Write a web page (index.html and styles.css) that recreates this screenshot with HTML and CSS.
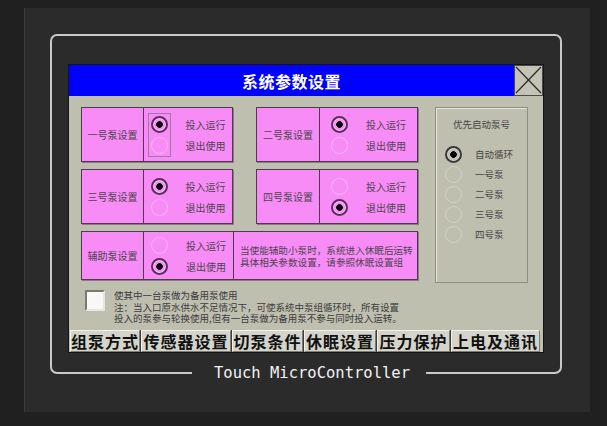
FILE: index.html
```html
<!DOCTYPE html>
<html lang="zh-CN">
<head>
    <meta charset="UTF-8">
    <meta name="viewport" content="width=device-width, initial-scale=1.0">
    <title>系统参数设置</title>
    <link rel="stylesheet" href="styles.css">
</head>
<body>
    <div class="device">
        <div class="bezel">
            <div class="window">
                <div class="titlebar">
                    <div class="title">系统参数设置</div>
                    <div class="close">
                        <svg width="27" height="28" viewBox="0 0 27 28">
                            <line x1="1" y1="1" x2="26" y2="27" stroke="#2a2a2a" stroke-width="1.2"/>
                            <line x1="26" y1="1" x2="1" y2="27" stroke="#2a2a2a" stroke-width="1.2"/>
                        </svg>
                    </div>
                </div>

                <div class="panel">
                    <div class="main">
                        <div class="pumps">
                            <div class="pump">
                                <div class="pump-name">一号泵设置</div>
                                <div class="pump-mode">
                                    <div class="radios focus">
                                        <span class="radio on"></span>
                                        <span class="radio"></span>
                                    </div>
                                    <div class="mode-labels"><span>投入运行</span><span>退出使用</span></div>
                                </div>
                            </div>
                            <div class="pump wide">
                                <div class="pump-name">二号泵设置</div>
                                <div class="pump-mode">
                                    <div class="radios">
                                        <span class="radio on"></span>
                                        <span class="radio"></span>
                                    </div>
                                    <div class="mode-labels"><span>投入运行</span><span>退出使用</span></div>
                                </div>
                            </div>
                            <div class="pump">
                                <div class="pump-name">三号泵设置</div>
                                <div class="pump-mode">
                                    <div class="radios">
                                        <span class="radio on"></span>
                                        <span class="radio"></span>
                                    </div>
                                    <div class="mode-labels"><span>投入运行</span><span>退出使用</span></div>
                                </div>
                            </div>
                            <div class="pump wide">
                                <div class="pump-name">四号泵设置</div>
                                <div class="pump-mode">
                                    <div class="radios">
                                        <span class="radio"></span>
                                        <span class="radio on"></span>
                                    </div>
                                    <div class="mode-labels"><span>投入运行</span><span>退出使用</span></div>
                                </div>
                            </div>
                            <div class="pump pump-aux">
                                <div class="pump-name">辅助泵设置</div>
                                <div class="pump-mode">
                                    <div class="radios">
                                        <span class="radio"></span>
                                        <span class="radio on"></span>
                                    </div>
                                    <div class="mode-labels"><span>投入运行</span><span>退出使用</span></div>
                                </div>
                                <div class="pump-hint">
                                    <p>当使能辅助小泵时，系统进入休眠后运转<br>具体相关参数设置，请参照休眠设置组</p>
                                </div>
                            </div>
                        </div>

                        <div class="priority">
                            <div class="priority-title">优先启动泵号</div>
                            <ul class="priority-list">
                                <li><span class="radio on"></span>自动循环</li>
                                <li><span class="radio"></span>一号泵</li>
                                <li><span class="radio"></span>二号泵</li>
                                <li><span class="radio"></span>三号泵</li>
                                <li><span class="radio"></span>四号泵</li>
                            </ul>
                        </div>
                    </div>

                    <div class="standby">
                        <span class="checkbox"></span>
                        <p>使其中一台泵做为备用泵使用<br>注：当入口原水供水不足情况下，可使系统中泵组循环时，所有设置<br>投入的泵参与轮换使用,但有一台泵做为备用泵不参与同时投入运转。</p>
                    </div>

                    <div class="tabs">
                        <div class="tab t1">组泵方式</div>
                        <div class="tab t2">传感器设置</div>
                        <div class="tab t3">切泵条件</div>
                        <div class="tab t4">休眠设置</div>
                        <div class="tab t5">压力保护</div>
                        <div class="tab t6">上电及通讯</div>
                    </div>
                </div>
            </div>
            <div class="brand">Touch MicroController</div>
        </div>
    </div>
</body>
</html>
```

FILE: styles.css
```css
body {
    margin: 0;
    background-color: #202020;
    font-family: "Noto Sans CJK SC", "Noto Sans", sans-serif;
}
.device {
    box-sizing: border-box;
    width: 565px;
    height: 404px;
    margin: 8px 0 0 25px;
    padding: 26px 0 0 25px;
    background-color: #2b2b2b;
    box-shadow: -1px 0 0 #3a3a3a;
}
.bezel {
    position: relative;
    box-sizing: border-box;
    width: 512px;
    height: 340px;
    padding: 29px 0 0 17px;
    border: 2px solid #c9c9c9;
    border-radius: 7px;
}
.brand {
    position: absolute;
    left: 140px;
    top: 328px;
    height: 18px;
    padding: 0 16px 0 22px;
    background-color: #2b2b2b;
    color: #f2f2f2;
    font-family: "DejaVu Sans Mono", monospace;
    font-size: 15.5px;
    line-height: 18px;
}

/* window */
.window {
    display: flex;
    flex-direction: column;
    width: 474px;
    height: 287px;
    box-shadow: 0 0 0 1px #151515;
}
.titlebar {
    display: flex;
    height: 31px;
}
.title {
    flex: 1;
    display: flex;
    align-items: center;
    justify-content: center;
    background-color: #0000ff;
    color: white;
    font-size: 16px;
    font-weight: bold;
    letter-spacing: 0.5px;
}
.close {
    box-sizing: border-box;
    width: 29px;
    border: 1px solid #4a4a4a;
    background-color: #c4c4b6;
}
.close svg {
    display: block;
}
.panel {
    flex: 1;
    display: flex;
    flex-direction: column;
    padding-top: 11px;
    background-color: #bfbfb0;
}
.main {
    display: flex;
    gap: 17px;
    margin-left: 12px;
}

/* pump boxes */
.pumps {
    display: grid;
    grid-template-columns: 152px 162px;
    grid-template-rows: 55px 55px 49px;
    column-gap: 23px;
    row-gap: 7px;
}
.pump {
    display: flex;
    min-width: 0;
    background-color: #f78cf7;
    border: 1px solid #4f3b4f;
    box-shadow: 1px 1px 0 rgba(70, 45, 70, 0.45);
    color: #4e444e;
    font-size: 10px;
}
.pump-name {
    display: flex;
    align-items: center;
    justify-content: center;
    width: 61px;
    border-right: 1px solid #4f3b4f;
}
.pump.wide .pump-name {
    width: 62px;
}
.pump-mode {
    flex: 1;
    display: flex;
    align-items: center;
    justify-content: center;
    gap: 18px;
}
.pump-aux {
    grid-column: 1 / -1;
}
.pump-aux .pump-mode {
    flex: none;
    width: 89px;
    border-right: 1px solid #4f3b4f;
}
.pump-hint {
    flex: 1;
    display: flex;
    align-items: center;
    padding-left: 6px;
    overflow: hidden;
}
.pump-hint p {
    margin: 0;
    font-size: 9.6px;
    line-height: 12px;
    white-space: nowrap;
}
.radios {
    display: flex;
    flex-direction: column;
    gap: 4px;
}
.radios.focus {
    outline: 1px solid #a277a2;
    outline-offset: 2px;
}
.mode-labels {
    display: flex;
    flex-direction: column;
}
.mode-labels span {
    line-height: 21px;
}

/* radio buttons */
.radio {
    display: block;
    box-sizing: border-box;
    width: 17px;
    height: 17px;
    border-radius: 50%;
    border: 1px solid #fbb6fb;
}
.radio.on {
    border: 2px solid #5a2d5a;
    background: radial-gradient(circle, #000 0 3px, transparent 3.6px);
    box-shadow: inset 0 0 0 1px #ffd0ff;
}

/* priority group */
.priority {
    box-sizing: border-box;
    width: 93px;
    height: 176px;
    border: 1px solid #8e8e84;
    box-shadow: inset 1px 1px 0 #e6e6dc;
    color: #464646;
    font-size: 9.5px;
}
.priority-title {
    padding-top: 10px;
    line-height: 12px;
    text-align: center;
}
.priority-list {
    margin: 14px 0 0;
    padding: 0;
    list-style: none;
}
.priority-list li {
    display: flex;
    align-items: center;
    gap: 13px;
    height: 20px;
    padding-left: 9px;
}
.priority .radio {
    border-color: #d2d2c6;
}
.priority .radio.on {
    border-color: #383838;
    box-shadow: inset 0 0 0 1px #e0e0d6;
}

/* standby note */
.standby {
    display: flex;
    gap: 9px;
    margin: 7px 0 0 16px;
}
.checkbox {
    box-sizing: border-box;
    width: 20px;
    height: 21px;
    background-color: #f8f8f6;
    border: 2px solid;
    border-color: #7a7a72 #e6e6de #e6e6de #7a7a72;
}
.standby p {
    margin: 0;
    color: #3c3c3c;
    font-size: 9.5px;
    line-height: 11.5px;
    white-space: nowrap;
}

/* bottom tabs */
.tabs {
    display: flex;
    gap: 1px;
    height: 22px;
    margin: auto 3px 0 1px;
    background-color: #3c3c38;
}
.tab {
    box-sizing: border-box;
    display: flex;
    align-items: center;
    justify-content: center;
    border: 1px solid;
    border-color: #f2f2ea #7c7c74 #7c7c74 #f2f2ea;
    background-color: #d4d4cb;
    color: #111;
    font-size: 16px;
    font-weight: bold;
    letter-spacing: 1px;
    line-height: 20px;
    white-space: nowrap;
}
.t1 { width: 70px; }
.t2 { width: 90px; }
.t3 { width: 71px; }
.t4 { width: 72px; }
.t5 { width: 73px; }
.t6 { width: 89px; }
```
